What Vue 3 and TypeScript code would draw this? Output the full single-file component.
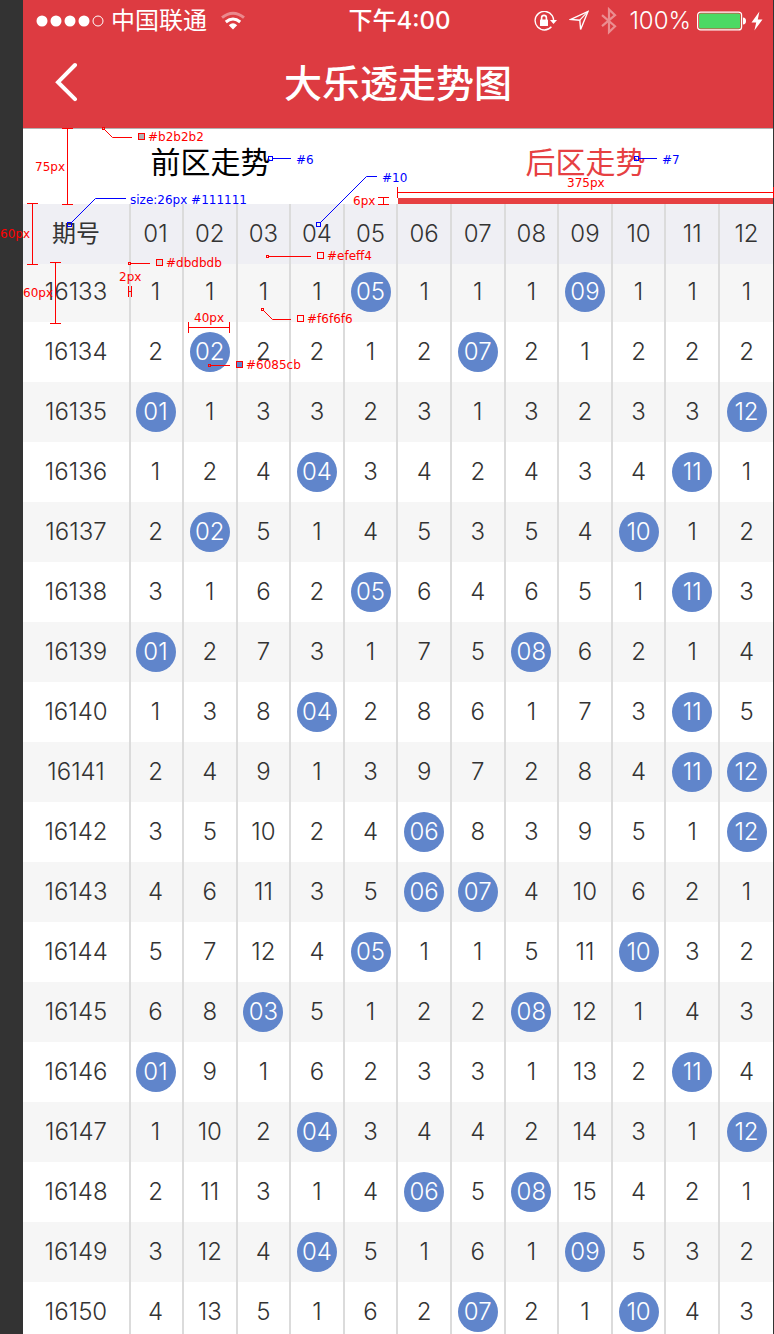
<script setup lang="ts">
import { ref } from 'vue'

interface Cell {
  text: string
  hit: boolean
}

interface Row {
  issue: number
  cells: Cell[]
}

interface Note {
  text: string
  x: number
  y: number
  tone: 'red' | 'blue'
  path: string
  dot?: [number, number]
  swatch?: [number, number, string]
}

const pad = (n: number): string => String(n).padStart(2, '0')
const columns = Array.from({ length: 12 }, (_, i) => i + 1)
const activeTab = ref<'front' | 'back'>('back')

const firstIssue = 16133
const draws: number[][] = [
  [5, 9], [2, 7], [1, 12], [4, 11], [2, 10], [5, 11],
  [1, 8], [4, 11], [11, 12], [6, 12], [6, 7], [5, 10],
  [3, 8], [1, 11], [4, 12], [6, 8], [4, 9], [7, 10],
]

// Each cell shows how many draws have passed since its number last came up.
const missed = columns.map(() => 0)
const rows: Row[] = draws.map((hits, index) => ({
  issue: firstIssue + index,
  cells: columns.map((n, i) => {
    const hit = hits.includes(n)
    missed[i] = hit ? 0 : missed[i] + 1
    return { text: hit ? pad(n) : String(missed[i]), hit }
  }),
}))

const notes: Note[] = [
  { text: '75px', x: 35, y: 171, tone: 'red', path: 'M62 128.5H73M67.5 128V205M62 204.5H73' },
  { text: '60px', x: 0, y: 238, tone: 'red', path: 'M27 203.5H38M32.5 203V265M27 264.5H38' },
  { text: '60px', x: 23, y: 297, tone: 'red', path: 'M50 262.5H61M55.5 262V324M50 323.5H61' },
  { text: '#b2b2b2', x: 148, y: 141, tone: 'red', path: 'M105 130L112.5 137.5H132', dot: [102, 127], swatch: [138, 133, '#b2b2b2'] },
  { text: 'size:26px #111111', x: 130, y: 204, tone: 'blue', path: 'M72 222L95.5 198.5H126', dot: [67, 222] },
  { text: '#6', x: 296, y: 164, tone: 'blue', path: 'M273 158.5H291', dot: [268, 156] },
  { text: '#7', x: 662, y: 164, tone: 'blue', path: 'M639 158.5H657', dot: [634, 156] },
  { text: '#10', x: 382, y: 182, tone: 'blue', path: 'M321 222L366.5 176.5H377', dot: [316, 222] },
  { text: '6px', x: 353, y: 205, tone: 'red', path: 'M378 197.5H389M383.5 197V204M378 204.5H389' },
  { text: '375px', x: 567, y: 187, tone: 'red', path: 'M397.5 187V198M397 192.5H774M773.5 187V198' },
  { text: '#dbdbdb', x: 166, y: 267, tone: 'red', path: 'M131 263.5H150', dot: [128, 262], swatch: [156, 259, '#dbdbdb'] },
  { text: '2px', x: 119, y: 281, tone: 'red', path: 'M128.5 286V297M128 291.5H132M131.5 286V297' },
  { text: '#efeff4', x: 327, y: 260, tone: 'red', path: 'M269 256.5H311', dot: [266, 255], swatch: [317, 252, '#efeff4'] },
  { text: '#f6f6f6', x: 307, y: 323, tone: 'red', path: 'M264 311L272.5 319.5H291', dot: [261, 308], swatch: [297, 315, '#f6f6f6'] },
  { text: '40px', x: 194, y: 322, tone: 'red', path: 'M188.5 322V333M188 327.5H230M229.5 322V333' },
  { text: '#6085cb', x: 246, y: 369, tone: 'red', path: 'M211 365.5H230', dot: [208, 364], swatch: [236, 361, '#6085cb'] },
]
const dotSize = (note: Note): number => (note.tone === 'blue' ? 4 : 2)
</script>

<template>
  <div class="stage">
    <main class="phone">
      <header class="top">
        <div class="status">
          <div class="carrier">
            <svg class="signal" width="68" height="12" viewBox="0 0 68 12" aria-hidden="true">
              <circle cx="6" cy="6" r="5.5" />
              <circle cx="20" cy="6" r="5.5" />
              <circle cx="34" cy="6" r="5.5" />
              <circle cx="48" cy="6" r="5.5" />
              <circle cx="62" cy="6" r="5" class="hollow" />
            </svg>
            <span>中国联通</span>
            <svg class="wifi" width="24" height="20" viewBox="0 0 24 20" aria-hidden="true">
              <path d="M1 6.6Q12-2.2 23 6.6" fill="none" stroke="#fff" stroke-opacity=".4" stroke-width="3" />
              <path d="M4.8 11Q12 5 19.2 11" fill="none" stroke="#fff" stroke-width="3" />
              <path d="M7.8 14.2Q12 10.4 16.2 14.2L12 18.6Z" fill="#fff" />
            </svg>
          </div>
          <time class="clock">下午4:00</time>
          <div class="indicators">
            <svg width="24" height="20" viewBox="0 0 24 20" aria-hidden="true">
              <path d="M19.2 4.6A9.3 9.3 0 1 0 18.4 15.8M19.2 4.6Q20.6 6.8 20.6 9.5" fill="none" stroke="#fff" stroke-width="1.4" />
              <path d="M17 9H24L20.5 13Z" fill="#fff" />
              <rect x="7" y="8.6" width="8" height="6.4" rx=".6" fill="#fff" />
              <path d="M8.6 9V6.8a2.4 2.4 0 0 1 4.8 0V9" fill="none" stroke="#fff" stroke-width="1.6" />
            </svg>
            <svg width="20" height="22" viewBox="0 0 20 22" aria-hidden="true">
              <path d="M1.8 9.4L19 1.4L11.6 19.4L10.8 10.2Z" fill="none" stroke="#fff" stroke-width="1.4" />
              <path d="M10.8 10.2L19 1.4" stroke="#fff" stroke-width="1.2" />
            </svg>
            <svg width="16" height="28" viewBox="0 0 16 28" aria-hidden="true">
              <path d="M1 8.2L14 19.2L8 25.2V2.4L14 8.2L1 19.2" fill="none" stroke="#fff" stroke-opacity=".42" stroke-width="2.2" />
            </svg>
            <span class="percent">100%</span>
            <svg width="50" height="20" viewBox="0 0 50 20" aria-hidden="true">
              <rect x=".6" y="1.1" width="44" height="17.8" rx="3" fill="none" stroke="#fff" stroke-width="1.2" />
              <rect x="2" y="2.5" width="41.2" height="15" rx="1.6" fill="#4cd964" />
              <path d="M46 6.5Q49 6.9 49 10Q49 13.1 46 13.5Z" fill="#fff" />
            </svg>
            <svg class="bolt" width="12" height="20" viewBox="0 0 12 20" aria-hidden="true">
              <path d="M8.4.5L.5 11.4H5.2L3.4 19.6L11.5 8.4H6.8Z" fill="#fff" />
            </svg>
          </div>
        </div>
        <div class="nav">
          <button class="back" type="button" aria-label="返回">
            <svg width="24" height="40" viewBox="0 0 24 40" aria-hidden="true">
              <path d="M20 3L3 20.2L20 37.2" fill="none" stroke="#fff" stroke-width="4" stroke-linecap="round" />
            </svg>
          </button>
          <h1>大乐透走势图</h1>
        </div>
      </header>

      <nav class="tabs">
        <button type="button" :class="{ active: activeTab === 'front' }" @click="activeTab = 'front'">前区走势</button>
        <button type="button" :class="{ active: activeTab === 'back' }" @click="activeTab = 'back'">后区走势</button>
      </nav>

      <table class="trend">
        <colgroup>
          <col class="issue-col">
          <col class="edge-col">
          <col v-for="n in 10" :key="n">
          <col class="edge-col">
        </colgroup>
        <thead>
          <tr>
            <th class="issue" scope="col">期号</th>
            <th v-for="n in columns" :key="n" scope="col">{{ pad(n) }}</th>
          </tr>
        </thead>
        <tbody>
          <tr v-for="row in rows" :key="row.issue">
            <th scope="row">{{ row.issue }}</th>
            <td v-for="(cell, i) in row.cells" :key="i">
              <span :class="{ ball: cell.hit }">{{ cell.text }}</span>
            </td>
          </tr>
        </tbody>
      </table>
    </main>

    <svg class="notes" width="774" height="380" viewBox="0 0 774 380">
      <g v-for="(note, i) in notes" :key="i" :class="note.tone">
        <path :d="note.path" />
        <rect
          v-if="note.dot"
          :x="note.dot[0] + 0.5"
          :y="note.dot[1] + 0.5"
          :width="dotSize(note)"
          :height="dotSize(note)"
        />
        <rect
          v-if="note.swatch"
          :x="note.swatch[0] + 0.5"
          :y="note.swatch[1] + 0.5"
          width="6"
          height="6"
          :fill="note.swatch[2]"
        />
        <text :x="note.x" :y="note.y">{{ note.text }}</text>
      </g>
    </svg>
  </div>
</template>

<style>
body {
  margin: 0;
}
</style>

<style scoped>
.stage {
  position: relative;
  box-sizing: border-box;
  height: 100vh;
  overflow: hidden;
  padding: 0 1px 0 23px;
  background: #333;
  font-family: Inter, "Noto Sans CJK SC", sans-serif;
}

.phone {
  background: #fff;
}

.top {
  background: #dd3b41;
  color: #fff;
  border-bottom: 1px solid #b2b2b2;
}

.status {
  display: grid;
  grid-template-columns: 1fr auto 1fr;
  align-items: center;
  box-sizing: border-box;
  height: 40px;
  padding: 1px 10px 0 13px;
  font-size: 24px;
  line-height: 39px;
}

.carrier,
.indicators {
  display: flex;
  align-items: center;
}

.signal {
  margin-right: 7px;
  fill: #fff;
}

.signal .hollow {
  fill: none;
  stroke: #fff;
}

.wifi {
  margin-left: 14px;
}

.clock {
  font-weight: 500;
}

.indicators {
  justify-content: flex-end;
  gap: 12px;
}

.percent {
  margin-right: -6px;
  font-weight: 300;
}

.bolt {
  margin-left: -8px;
}

.nav {
  display: grid;
  grid-template-columns: 88px 1fr 88px;
  align-items: center;
  height: 88px;
}

.back {
  display: flex;
  justify-content: center;
  padding: 0 0 4px;
  border: 0;
  background: none;
}

h1 {
  margin: 0;
  padding-bottom: 2px;
  font-size: 38px;
  font-weight: 500;
  line-height: 56px;
  text-align: center;
}

.tabs {
  display: flex;
}

.tabs button {
  flex: 1;
  box-sizing: border-box;
  height: 75px;
  padding: 0 0 8px;
  border: 0;
  border-bottom: 6px solid transparent;
  background: none;
  color: #000;
  font-family: inherit;
  font-size: 30px;
  font-weight: 400;
}

.tabs .active {
  border-bottom-color: #e64042;
  color: #e64042;
}

.trend {
  width: 100%;
  table-layout: fixed;
  border-collapse: separate;
  border-spacing: 0;
  color: #333;
  font-size: 24px;
  line-height: 40px;
}

.issue-col {
  width: 108px;
}

.edge-col {
  width: 53px;
}

.trend th,
.trend td {
  box-sizing: border-box;
  height: 60px;
  padding: 0;
  border-right: 2px solid #dbdbdb;
  font-weight: 300;
  text-align: center;
  vertical-align: middle;
}

.trend tr > :nth-child(2) {
  padding-right: 2px;
}

.trend tr > :last-child {
  border-right: 0;
}

.trend .issue {
  font-weight: 400;
}

.trend thead {
  background: #efeff4;
}

.trend tbody tr:nth-child(odd) {
  background: #f6f6f6;
}

.trend tbody tr:first-child > * {
  height: 58px;
  padding-bottom: 2px;
}

.ball {
  display: block;
  width: 40px;
  height: 40px;
  margin: 0 auto;
  border-radius: 50%;
  background: #6085cb;
  color: #fff;
}

.notes {
  position: absolute;
  top: 0;
  left: 0;
  pointer-events: none;
  font-family: "DejaVu Sans", sans-serif;
  font-size: 12px;
}

.notes path,
.notes rect {
  stroke-width: 1px;
}

.notes path,
.notes rect:not([fill]) {
  fill: none;
}

.red path,
.red rect {
  stroke: #f00;
}

.red text {
  fill: #f00;
}

.blue path,
.blue rect {
  stroke: #00f;
}

.blue text {
  fill: #00f;
}
</style>
